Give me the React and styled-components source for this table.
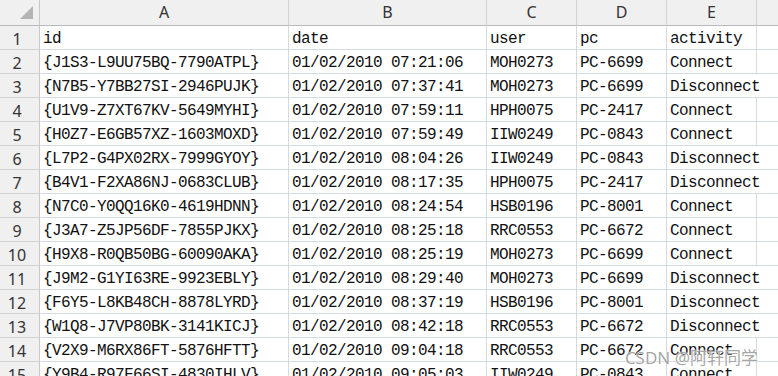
import React from "react";
import styled, { createGlobalStyle } from "styled-components";

const GlobalStyle = createGlobalStyle`
  html, body {
    margin: 0;
    padding: 0;
    background: #ffffff;
    overflow: hidden;
  }
`;

const Page = styled.div`
  position: relative;
  width: 778px;
  height: 376px;
  overflow: hidden;
  background: #ffffff;
`;

const Sheet = styled.div`
  display: grid;
  grid-template-columns: 40px 249px 198px 90px 90px 90px 90px;
  grid-auto-rows: 24px;
  grid-template-rows: 26px;
  width: 847px;
`;

const Corner = styled.div`
  position: relative;
  background: #f0f0f0;
  border-right: 1px solid #c8c8c8;
  border-bottom: 1px solid #b9b9b9;
  box-sizing: border-box;
`;

const Triangle = styled.div`
  position: absolute;
  left: 20px;
  top: 6px;
  width: 0;
  height: 0;
  border-left: 13px solid transparent;
  border-bottom: 13px solid #b4b4b4;
`;

const ColHeader = styled.div`
  display: flex;
  align-items: center;
  justify-content: center;
  background: #f0f0f0;
  border-right: 1px solid #d2d2d2;
  border-bottom: 1px solid #b9b9b9;
  box-sizing: border-box;
  font-family: "Noto Sans", "Liberation Sans", sans-serif;
  font-size: 16px;
  color: #333333;
  padding-bottom: 1px;
`;

const RowHeader = styled.div`
  display: flex;
  align-items: center;
  justify-content: center;
  background: #f0f0f0;
  border-right: 1px solid #c8c8c8;
  border-bottom: 1px solid #d2d2d2;
  box-sizing: border-box;
  padding-right: 5px;
  padding-top: 2px;
  font-family: "Noto Sans", "Liberation Sans", sans-serif;
  font-size: 16px;
  color: #333333;
`;

const Cell = styled.div`
  display: flex;
  align-items: center;
  box-sizing: border-box;
  padding: 2px 0 0 3px;
  border-right: 1px solid ${(p) => (p.$spill ? "transparent" : "#d5d9e0")};
  border-bottom: 1px solid #d5d9e0;
  white-space: nowrap;
  overflow: visible;
  font-family: "Liberation Mono", "DejaVu Sans Mono", monospace;
  font-size: 16px;
  letter-spacing: -0.6px;
  color: #111111;
  min-width: 0;
`;

const Watermark = styled.div`
  position: absolute;
  right: 20px;
  bottom: 7px;
  font-family: "Noto Sans", "Noto Sans CJK SC", sans-serif;
  font-size: 17px;
  color: rgba(135, 135, 135, 0.75);
  text-shadow: 0 0 2px #ffffff, 0 0 1px #ffffff;
  pointer-events: none;
`;

const columns = ["A", "B", "C", "D", "E", "F"];

const rows = [
  ["id", "date", "user", "pc", "activity"],
  ["{J1S3-L9UU75BQ-7790ATPL}", "01/02/2010 07:21:06", "MOH0273", "PC-6699", "Connect"],
  ["{N7B5-Y7BB27SI-2946PUJK}", "01/02/2010 07:37:41", "MOH0273", "PC-6699", "Disconnect"],
  ["{U1V9-Z7XT67KV-5649MYHI}", "01/02/2010 07:59:11", "HPH0075", "PC-2417", "Connect"],
  ["{H0Z7-E6GB57XZ-1603MOXD}", "01/02/2010 07:59:49", "IIW0249", "PC-0843", "Connect"],
  ["{L7P2-G4PX02RX-7999GYOY}", "01/02/2010 08:04:26", "IIW0249", "PC-0843", "Disconnect"],
  ["{B4V1-F2XA86NJ-0683CLUB}", "01/02/2010 08:17:35", "HPH0075", "PC-2417", "Disconnect"],
  ["{N7C0-Y0QQ16K0-4619HDNN}", "01/02/2010 08:24:54", "HSB0196", "PC-8001", "Connect"],
  ["{J3A7-Z5JP56DF-7855PJKX}", "01/02/2010 08:25:18", "RRC0553", "PC-6672", "Connect"],
  ["{H9X8-R0QB50BG-60090AKA}", "01/02/2010 08:25:19", "MOH0273", "PC-6699", "Connect"],
  ["{J9M2-G1YI63RE-9923EBLY}", "01/02/2010 08:29:40", "MOH0273", "PC-6699", "Disconnect"],
  ["{F6Y5-L8KB48CH-8878LYRD}", "01/02/2010 08:37:19", "HSB0196", "PC-8001", "Disconnect"],
  ["{W1Q8-J7VP80BK-3141KICJ}", "01/02/2010 08:42:18", "RRC0553", "PC-6672", "Disconnect"],
  ["{V2X9-M6RX86FT-5876HFTT}", "01/02/2010 09:04:18", "RRC0553", "PC-6672", "Connect"],
  ["{Y9B4-R97F66SI-4830IHLV}", "01/02/2010 09:05:03", "IIW0249", "PC-0843", "Connect"],
];

export default function App() {
  return (
    <Page>
      <GlobalStyle />
      <Sheet>
        <Corner>
          <Triangle />
        </Corner>
        {columns.map((c) => (
          <ColHeader key={c}>{c}</ColHeader>
        ))}
        {rows.map((row, i) => (
          <React.Fragment key={i}>
            <RowHeader>{i + 1}</RowHeader>
            {row.map((value, j) => (
              <Cell key={j} $spill={j === 4 && value.length * 9 + 3 > 90}>
                {value}
              </Cell>
            ))}
            <Cell />
          </React.Fragment>
        ))}
      </Sheet>
      <Watermark>CSDN @阿轩同学</Watermark>
    </Page>
  );
}
